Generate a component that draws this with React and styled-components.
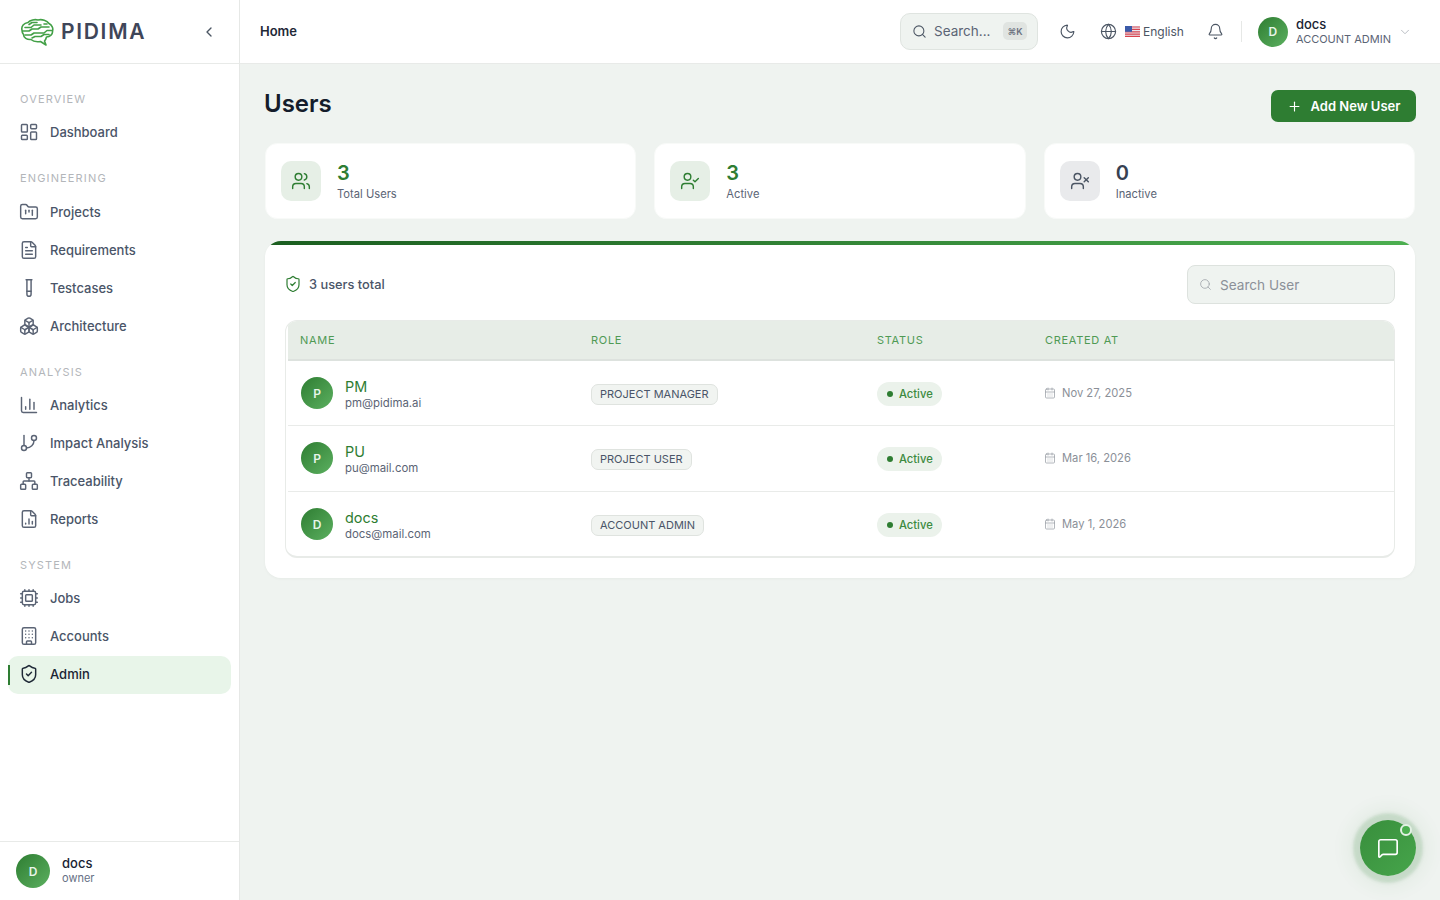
import React from 'react';
import styled, { createGlobalStyle } from 'styled-components';
import {
  Bell, Boxes, Building, CalendarDays, ChartColumn, ChevronDown, ChevronLeft, Cpu, FileChartColumn,
  FileText, FolderKanban, GitBranch, Globe, LayoutDashboard, MessageSquare, Moon, Network, Plus,
  Search, ShieldCheck, TestTube, UserCheck, Users, UserX,
} from 'lucide-react';

const GlobalStyle = createGlobalStyle`
  html, body { margin: 0; padding: 0; }
  body {
    font-family: Inter, "Noto Sans", "Liberation Sans", sans-serif;
    background: #eff3f0;
    color: #1f2937;
  }
  * { box-sizing: border-box; }
`;

const Shell = styled.div`
  display: flex;
  height: 900px;
  overflow: hidden;
`;

const Sidebar = styled.aside`
  width: 240px;
  flex-shrink: 0;
  background: #ffffff;
  border-right: 1px solid #e6e8e6;
  display: flex;
  flex-direction: column;
`;

const Brand = styled.div`
  height: 64px;
  flex-shrink: 0;
  border-bottom: 1px solid #e8eae8;
  padding: 0 22px 0 20px;
  display: flex;
  align-items: center;
  justify-content: space-between;
  color: #4b5563;
`;

const LogoWrap = styled.div`
  display: flex;
  align-items: center;
  gap: 7px;
`;

const Wordmark = styled.span`
  font-size: 21px;
  font-weight: 600;
  letter-spacing: 1.7px;
  color: #3f4659;
`;

const Nav = styled.nav`
  flex: 1;
  padding: 26.9px 8px 0;
  display: flex;
  flex-direction: column;
  gap: 19.25px;
`;

const NavLabel = styled.div`
  height: 16px;
  line-height: 16px;
  margin-bottom: 6.2px;
  padding-left: 12px;
  font-size: 11px;
  letter-spacing: 1.15px;
  color: #b3b6ba;
`;

const NavItem = styled.a`
  position: relative;
  height: 38px;
  display: flex;
  align-items: center;
  gap: 11px;
  padding-left: 11px;
  border-radius: 10px;
  font-size: 13px;
  font-weight: 500;
  color: ${(p) => (p.$active ? '#1a2333' : '#4a5568')};
  background: ${(p) => (p.$active ? '#e8f5e9' : 'transparent')};
  svg { color: ${(p) => (p.$active ? '#1f2937' : '#5b6475')}; flex-shrink: 0; }
  ${(p) => p.$active && `
    margin-top: 0.3px;
    padding-bottom: 1px;
    &::before {
      content: '';
      position: absolute;
      left: 0;
      top: 9px;
      width: 2px;
      height: 20px;
      background: #2e7d32;
    }
  `}
`;

const SideFooter = styled.div`
  height: 59px;
  border-top: 1px solid #e8eae8;
  padding: 0 16px;
  display: flex;
  align-items: center;
  gap: 12px;
`;

const FootText = styled.div`
  padding-bottom: 2px;
`;

const Avatar = styled.div`
  width: ${(p) => p.$size}px;
  height: ${(p) => p.$size}px;
  border-radius: 50%;
  flex-shrink: 0;
  display: flex;
  align-items: center;
  justify-content: center;
  background: linear-gradient(135deg, #2e7d32, #5cb060);
  color: #e8f5e9;
  font-size: 12px;
  font-weight: 600;
`;

const FootName = styled.div`
  font-size: 13px;
  font-weight: 500;
  line-height: 15px;
  color: #1a2333;
`;

const FootRole = styled.div`
  font-size: 11px;
  line-height: 14px;
  color: #667085;
`;

const Body = styled.div`
  flex: 1;
  min-width: 0;
  display: flex;
  flex-direction: column;
`;

const Header = styled.header`
  height: 64px;
  flex-shrink: 0;
  background: #ffffff;
  border-bottom: 1px solid #e8eae8;
  padding: 0 28px 0 20px;
  display: flex;
  align-items: center;
`;

const Crumb = styled.div`
  font-size: 13px;
  font-weight: 600;
  padding-bottom: 1px;
  color: #1f2937;
  margin-right: auto;
`;

const GlobalSearch = styled.div`
  width: 138px;
  height: 37px;
  border-radius: 10px;
  border: 1px solid #dfe4e0;
  background: #eff3f0;
  padding: 0 10px 1px 11px;
  display: flex;
  align-items: center;
  gap: 7px;
  font-size: 13.5px;
  color: #5b6475;
  svg { color: #4b5563; flex-shrink: 0; }
`;

const Kbd = styled.span`
  margin-left: auto;
  width: 24px;
  height: 18px;
  border-radius: 5px;
  background: #e0e4e1;
  font-size: 9px;
  font-weight: 600;
  display: flex;
  align-items: center;
  justify-content: center;
  color: #6b7280;
`;

const HeadIcon = styled.div`
  display: flex;
  color: #4b5563;
  margin-left: ${(p) => p.$ml}px;
`;

const Lang = styled.div`
  margin-left: 8px;
  display: flex;
  align-items: center;
  gap: 3px;
  font-size: 12px;
  color: #4b5563;
`;

const Divider = styled.div`
  width: 1px;
  height: 21px;
  background: #e6e8e6;
  margin: 0 16px 0 17px;
`;

const HeadUser = styled.div`
  margin-left: 8px;
`;

const HeadName = styled.div`
  font-size: 13px;
  font-weight: 500;
  line-height: 15px;
  color: #1a2333;
`;

const HeadRole = styled.div`
  font-size: 11px;
  line-height: 15px;
  color: #5b6475;
`;

const Chevron = styled.div`
  display: flex;
  margin-left: 7px;
  color: #b0b5bb;
`;

const Main = styled.main`
  flex: 1;
  padding: 26px 24px 0;
`;

const TitleRow = styled.div`
  display: flex;
  align-items: center;
  justify-content: space-between;
  height: 32px;
`;

const Title = styled.h1`
  margin: 0;
  font-size: 24px;
  font-weight: 600;
  color: #141c2b;
  position: relative;
  top: -3px;
`;

const AddButton = styled.button`
  width: 145px;
  height: 32px;
  border: none;
  border-radius: 7px;
  background: #2e7d32;
  color: #ffffff;
  font-family: inherit;
  font-size: 13px;
  font-weight: 600;
  display: flex;
  align-items: center;
  justify-content: center;
  gap: 9px;
`;

const Stats = styled.div`
  display: grid;
  grid-template-columns: repeat(3, 1fr);
  gap: 18px;
  margin: 21px 1px 0;
`;

const StatCard = styled.div`
  height: 76px;
  background: #ffffff;
  border: 1px solid #f8faf8;
  border-radius: 12px;
  padding: 0 15px;
  display: flex;
  align-items: center;
  gap: 16px;
`;

const StatIcon = styled.div`
  width: 40px;
  height: 40px;
  border-radius: 10px;
  display: flex;
  align-items: center;
  justify-content: center;
  background: ${(p) => (p.$muted ? '#e9eaec' : '#e6efe6')};
  color: ${(p) => (p.$muted ? '#4b5563' : '#2e7d32')};
`;

const StatValue = styled.div`
  font-size: 20px;
  font-weight: 600;
  line-height: 26px;
  color: ${(p) => (p.$muted ? '#374151' : '#2e7d32')};
`;

const StatLabel = styled.div`
  font-size: 11.2px;
  line-height: 16px;
  color: #5b6475;
`;

const Panel = styled.section`
  margin: 22px 1px 0;
  background: #ffffff;
  border-radius: 16px;
  overflow: hidden;
  box-shadow: 0 1px 3px rgba(30, 60, 30, 0.04);
  height: 337px;
`;

const GradientBar = styled.div`
  height: 4px;
  background: linear-gradient(90deg, #1b5e20, #2e7d32 40%, #4caf50);
`;

const PanelBody = styled.div`
  padding: 20px 20px 0;
`;

const Toolbar = styled.div`
  display: flex;
  align-items: center;
  justify-content: space-between;
  height: 39px;
`;

const CountLabel = styled.div`
  display: flex;
  align-items: center;
  gap: 7px;
  margin-left: -1px;
  padding-bottom: 1px;
  font-size: 12.8px;
  font-weight: 500;
  color: #4a5568;
  svg { color: #2e7d32; }
`;

const UserSearch = styled.div`
  width: 208px;
  height: 39px;
  border-radius: 8px;
  border: 1px solid #dde2de;
  background: #eff3f0;
  padding: 0 11px;
  display: flex;
  align-items: center;
  gap: 8px;
  font-size: 13.6px;
  color: #8b9098;
  svg { color: #a3a8ae; }
`;

const TableWrap = styled.div`
  margin-top: 16px;
  height: 238px;
  border: 1px solid #e8ebe8;
  border-bottom-width: 2px;
  border-radius: 12px;
  overflow: hidden;
  padding-left: 2px;
`;

const Columns = styled.div`
  display: grid;
  grid-template-columns: 291px 286px 168px 1fr;
  align-items: center;
  padding-left: 12px;
`;

const HeadRow = styled(Columns)`
  height: 40px;
  background: #e7ede7;
  border-bottom: 2px solid #dde2de;
  font-size: 11px;
  font-weight: 400;
  letter-spacing: 0.7px;
  color: #4f9a54;
`;

const Row = styled(Columns)`
  height: 65.33px;
  border-bottom: 1px solid #e9ebe9;
  &:last-child { border-bottom: none; }
`;

const NameCell = styled.div`
  display: flex;
  align-items: center;
  gap: 12px;
  padding-left: 1px;
`;

const NameText = styled.div`
  padding-top: 3px;
`;

const UserName = styled.div`
  font-size: 14.4px;
  line-height: 17px;
  color: #2e7d32;
`;

const UserEmail = styled.div`
  font-size: 11.4px;
  line-height: 17px;
  color: #5b6475;
`;

const RoleChip = styled.span`
  display: inline-block;
  height: 21px;
  line-height: 19px;
  padding: 0 8px;
  border-radius: 7px;
  border: 1px solid #dfe3df;
  background: #f1f4f1;
  font-size: 11px;
  color: #4a5568;
`;

const StatusPill = styled.span`
  width: 65px;
  height: 24px;
  padding-left: 10px;
  border-radius: 12px;
  background: #ebf2eb;
  display: inline-flex;
  align-items: center;
  gap: 6px;
  font-size: 11.2px;
  font-weight: 500;
  color: #3b8a40;
`;

const Dot = styled.span`
  width: 6px;
  height: 6px;
  border-radius: 50%;
  background: #2e7d32;
`;

const DateCell = styled.div`
  display: flex;
  align-items: center;
  gap: 6.5px;
  margin-left: -1.5px;
  font-size: 11.2px;
  color: #8b9098;
  svg { color: #9a9fa6; }
`;

const ChatButton = styled.button`
  position: fixed;
  right: 24px;
  bottom: 24px;
  width: 56px;
  height: 56px;
  border: none;
  border-radius: 50%;
  background: linear-gradient(135deg, #388e3c, #46a54b);
  color: #ffffff;
  display: flex;
  align-items: center;
  justify-content: center;
  box-shadow: 0 0 3px 7px rgba(46, 125, 50, 0.16), 0 0 20px 10px rgba(46, 125, 50, 0.08);
`;

const ChatBadge = styled.span`
  position: absolute;
  top: 4px;
  right: 4px;
  width: 12px;
  height: 12px;
  border-radius: 50%;
  border: 2px solid #e3f1e4;
  background: #4caf50;
`;

const navSections = [
  { label: 'OVERVIEW', items: [{ name: 'Dashboard', icon: LayoutDashboard }] },
  {
    label: 'ENGINEERING',
    items: [
      { name: 'Projects', icon: FolderKanban },
      { name: 'Requirements', icon: FileText },
      { name: 'Testcases', icon: TestTube },
      { name: 'Architecture', icon: Boxes },
    ],
  },
  {
    label: 'ANALYSIS',
    items: [
      { name: 'Analytics', icon: ChartColumn },
      { name: 'Impact Analysis', icon: GitBranch },
      { name: 'Traceability', icon: Network },
      { name: 'Reports', icon: FileChartColumn },
    ],
  },
  {
    label: 'SYSTEM',
    items: [
      { name: 'Jobs', icon: Cpu },
      { name: 'Accounts', icon: Building },
      { name: 'Admin', icon: ShieldCheck, active: true },
    ],
  },
];

const stats = [
  { value: 3, label: 'Total Users', icon: Users },
  { value: 3, label: 'Active', icon: UserCheck },
  { value: 0, label: 'Inactive', icon: UserX, muted: true },
];

const users = [
  { initial: 'P', name: 'PM', email: 'pm@pidima.ai', role: 'PROJECT MANAGER', created: 'Nov 27, 2025' },
  { initial: 'P', name: 'PU', email: 'pu@mail.com', role: 'PROJECT USER', created: 'Mar 16, 2026' },
  { initial: 'D', name: 'docs', email: 'docs@mail.com', role: 'ACCOUNT ADMIN', created: 'May 1, 2026' },
];

const BrainLogo = () => (
  <svg width="34" height="28" viewBox="0 0 34 28" fill="none" stroke="#43a047" strokeWidth="1.6" strokeLinecap="round" strokeLinejoin="round">
    <path d="M2 12C1 8 4 5 8 4.5C10 2 15 1 18 2C22 1 27 2.5 29 5.5C32 7 33.5 10.5 32.5 13C33 16 30 19 26.5 19C26 21 25.5 22 24.5 23L26 27L20.5 23.5C17 24 13 23.5 11 21.5C7 22 3.5 19.5 3.5 16.5C2.5 15.5 2 14 2 12Z" />
    <path d="M5 9.5H11L14 7H21" />
    <path d="M9 6.5L12 4.5H17" />
    <path d="M2.5 13H9L12 11H18L21 9H29" />
    <path d="M5 17H11L14 15H24L27 12.5H32" />
    <path d="M12 20L15 18.5H21L24 16.5H29" />
    <path d="M24 6H27" />
  </svg>
);

const UsFlag = () => (
  <svg width="15" height="11" viewBox="0 0 15 11">
    <rect width="15" height="11" rx="1" fill="#e8eaf0" />
    <path d="M0 1h15M0 3.4h15M0 5.8h15M0 8.2h15M0 10.3h15" stroke="#d9434e" strokeWidth="1.2" />
    <rect width="7" height="5.8" fill="#3b5aa8" />
  </svg>
);

const App = () => (
  <>
    <GlobalStyle />
    <Shell>
      <Sidebar>
        <Brand>
          <LogoWrap>
            <BrainLogo />
            <Wordmark>PIDIMA</Wordmark>
          </LogoWrap>
          <ChevronLeft size={16} />
        </Brand>
        <Nav>
          {navSections.map((section) => (
            <div key={section.label}>
              <NavLabel>{section.label}</NavLabel>
              {section.items.map((item) => (
                <NavItem key={item.name} $active={item.active}>
                  <item.icon size={20} strokeWidth={1.75} />
                  {item.name}
                </NavItem>
              ))}
            </div>
          ))}
        </Nav>
        <SideFooter>
          <Avatar $size={34}>D</Avatar>
          <FootText>
            <FootName>docs</FootName>
            <FootRole>owner</FootRole>
          </FootText>
        </SideFooter>
      </Sidebar>
      <Body>
        <Header>
          <Crumb>Home</Crumb>
          <GlobalSearch>
            <Search size={15} strokeWidth={1.7} />
            Search...
            <Kbd>⌘K</Kbd>
          </GlobalSearch>
          <HeadIcon $ml={21}><Moon size={17} strokeWidth={1.6} /></HeadIcon>
          <HeadIcon $ml={24}><Globe size={17} strokeWidth={1.6} /></HeadIcon>
          <Lang><UsFlag />English</Lang>
          <HeadIcon $ml={23}><Bell size={17} strokeWidth={1.6} /></HeadIcon>
          <Divider />
          <Avatar $size={30}>D</Avatar>
          <HeadUser>
            <HeadName>docs</HeadName>
            <HeadRole>ACCOUNT ADMIN</HeadRole>
          </HeadUser>
          <Chevron><ChevronDown size={14} strokeWidth={1.5} /></Chevron>
        </Header>
        <Main>
          <TitleRow>
            <Title>Users</Title>
            <AddButton><Plus size={15} strokeWidth={1.8} />Add New User</AddButton>
          </TitleRow>
          <Stats>
            {stats.map((stat) => (
              <StatCard key={stat.label}>
                <StatIcon $muted={stat.muted}><stat.icon size={20} strokeWidth={1.7} /></StatIcon>
                <div>
                  <StatValue $muted={stat.muted}>{stat.value}</StatValue>
                  <StatLabel>{stat.label}</StatLabel>
                </div>
              </StatCard>
            ))}
          </Stats>
          <Panel>
            <GradientBar />
            <PanelBody>
              <Toolbar>
                <CountLabel><ShieldCheck size={18} strokeWidth={1.6} />3 users total</CountLabel>
                <UserSearch><Search size={13} strokeWidth={1.6} />Search User</UserSearch>
              </Toolbar>
              <TableWrap>
                <HeadRow>
                  <div>NAME</div>
                  <div>ROLE</div>
                  <div>STATUS</div>
                  <div>CREATED AT</div>
                </HeadRow>
                {users.map((user) => (
                  <Row key={user.email}>
                    <NameCell>
                      <Avatar $size={32}>{user.initial}</Avatar>
                      <NameText>
                        <UserName>{user.name}</UserName>
                        <UserEmail>{user.email}</UserEmail>
                      </NameText>
                    </NameCell>
                    <div><RoleChip>{user.role}</RoleChip></div>
                    <div><StatusPill><Dot />Active</StatusPill></div>
                    <DateCell><CalendarDays size={12} strokeWidth={1.5} />{user.created}</DateCell>
                  </Row>
                ))}
              </TableWrap>
            </PanelBody>
          </Panel>
        </Main>
      </Body>
    </Shell>
    <ChatButton>
      <MessageSquare size={22} strokeWidth={1.8} />
      <ChatBadge />
    </ChatButton>
  </>
);

export default App;
